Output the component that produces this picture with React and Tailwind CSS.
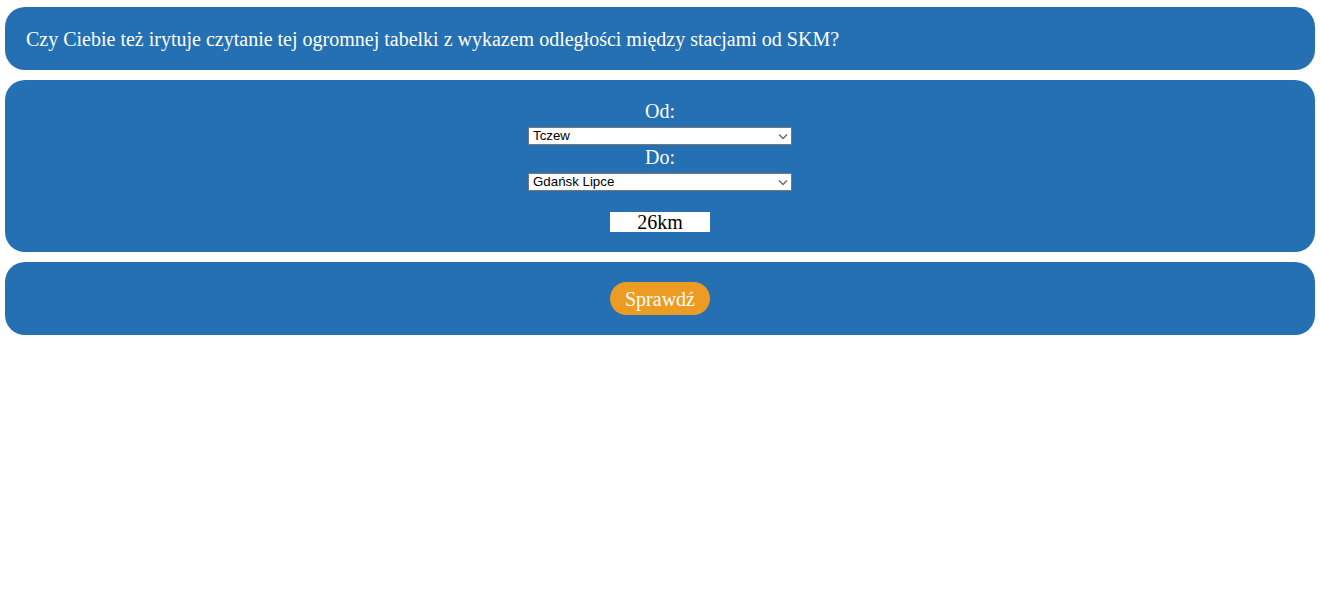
import React from "react";

function Select({ value }) {
  return (
    <div className="relative mt-[4px] w-[264px] h-[18px] text-[13px] leading-none">
      <select
        className="block appearance-none w-full h-full bg-white text-black text-[13.3px] font-['Liberation_Sans',sans-serif] border border-[#767676] pl-[4px] py-0 leading-none outline-none"
        defaultValue={value}
      >
        <option>{value}</option>
      </select>
      <svg
        className="absolute right-[4px] top-[6px] pointer-events-none"
        width="10"
        height="7"
        viewBox="0 0 10 7"
        fill="none"
      >
        <path d="M1 1.5 L5 5.5 L9 1.5" stroke="#6d6d6d" strokeWidth="1.5" />
      </svg>
    </div>
  );
}

export default function App() {
  return (
    <div className="min-h-[602px] bg-white pt-[7px] pl-[5px] pr-[6px] flex flex-col gap-[10px]">
      <div className="bg-[#2470b3] rounded-[20px] h-[63px] flex items-center pl-[21px] font-['Liberation_Serif',serif] text-white text-[20px]">
        Czy Ciebie też irytuje czytanie tej ogromnej tabelki z wykazem odległości między stacjami od SKM?
      </div>
      <div className="bg-[#2470b3] rounded-[20px] h-[172px] flex flex-col items-center pt-[20px] font-['Liberation_Serif',serif] text-white text-[20px]">
        <div className="leading-[23px] h-[23px]">Od:</div>
        <Select value="Tczew" />
        <div className="leading-[23px] h-[23px] mt-[1px]">Do:</div>
        <Select value="Gdańsk Lipce" />
        <div className="mt-[21px] w-[100px] h-[20px] bg-white text-black text-center leading-[20px]">26km</div>
      </div>
      <div className="bg-[#2470b3] rounded-[20px] h-[73px] flex justify-center pt-[20px] font-['Liberation_Serif',serif]">
        <button className="w-[100px] h-[33px] rounded-full bg-[#ec9c23] text-white text-[20px]">Sprawdź</button>
      </div>
    </div>
  );
}
